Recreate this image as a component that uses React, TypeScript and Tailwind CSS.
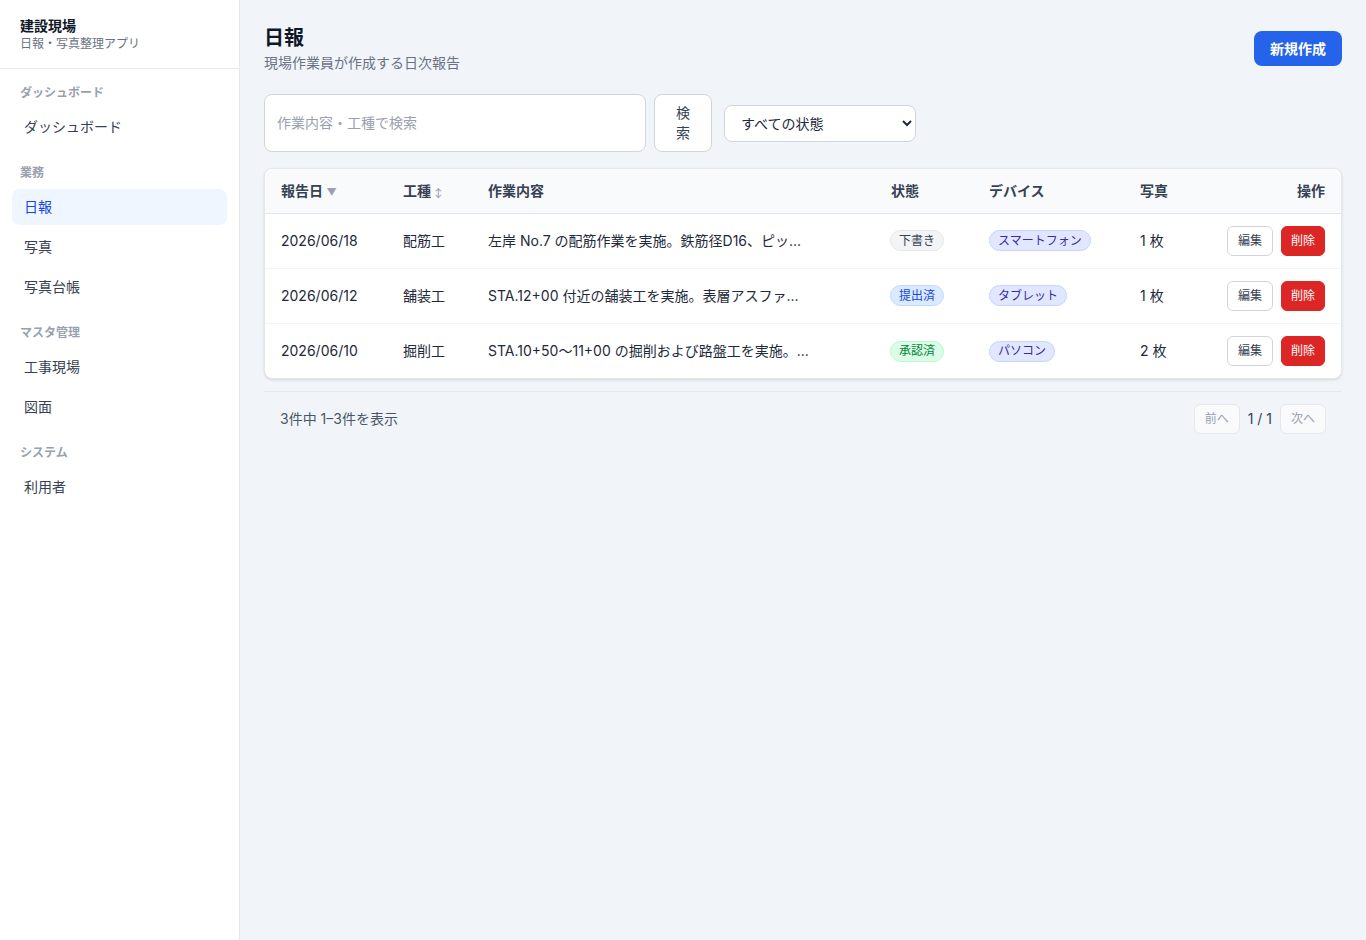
import React from "react";

const navSections = [
  { label: "ダッシュボード", items: ["ダッシュボード"] },
  { label: "業務", items: ["日報", "写真", "写真台帳"] },
  { label: "マスタ管理", items: ["工事現場", "図面"] },
  { label: "システム", items: ["利用者"] },
];

const rows = [
  {
    date: "2026/06/18",
    kind: "配筋工",
    content: "左岸 No.7 の配筋作業を実施。鉄筋径D16、ピッ...",
    status: "下書き",
    statusCls: "bg-gray-100 border-gray-200 text-gray-700",
    device: "スマートフォン",
    photos: "1 枚",
  },
  {
    date: "2026/06/12",
    kind: "舗装工",
    content: "STA.12+00 付近の舗装工を実施。表層アスファ...",
    status: "提出済",
    statusCls: "bg-blue-100 border-blue-200 text-blue-700",
    device: "タブレット",
    photos: "1 枚",
  },
  {
    date: "2026/06/10",
    kind: "掘削工",
    content: "STA.10+50〜11+00 の掘削および路盤工を実施。...",
    status: "承認済",
    statusCls: "bg-green-100 border-green-200 text-green-700",
    device: "パソコン",
    photos: "2 枚",
  },
];

export default function App() {
  return (
    <div
      className="flex min-h-[940px] w-full bg-[#f1f5f9] text-gray-800"
      style={{ fontFamily: '"Inter", "Noto Sans CJK JP", sans-serif' }}
    >
      <aside className="w-[240px] shrink-0 border-r border-gray-200 bg-white">
        <div className="h-[69px] border-b border-gray-200 px-5 pt-4">
          <div className="text-sm font-bold leading-5 text-gray-900">建設現場</div>
          <div className="text-xs leading-4 text-gray-500">日報・写真整理アプリ</div>
        </div>
        <nav className="flex flex-col gap-5 px-3 pt-4">
          {navSections.map((s) => (
            <div key={s.label} className="flex flex-col">
              <div className="mb-2 px-2 text-xs font-bold leading-4 text-gray-400">{s.label}</div>
              <div className="flex flex-col gap-1">
                {s.items.map((it) => {
                  const active = it === "日報";
                  return (
                    <div
                      key={it}
                      className={
                        active
                          ? "flex h-9 items-center rounded-lg bg-blue-50 px-3 text-sm text-blue-700"
                          : "flex h-9 items-center rounded-lg px-3 text-sm text-gray-700"
                      }
                    >
                      {it}
                    </div>
                  );
                })}
              </div>
            </div>
          ))}
        </nav>
      </aside>

      <main className="flex-1 px-6 pt-6">
        <div className="flex items-center justify-between">
          <div>
            <h1 className="text-xl font-bold leading-7 text-gray-900">日報</h1>
            <p className="mt-px text-sm leading-5 text-gray-500">現場作業員が作成する日次報告</p>
          </div>
          <button className="h-[35px] rounded-lg bg-[#2563eb] px-4 text-sm font-semibold text-white">
            新規作成
          </button>
        </div>

        <div className="mt-[21px] flex items-stretch">
          <input
            className="w-[382px] rounded-lg border border-gray-300 bg-white px-3 text-sm text-gray-800 placeholder:text-gray-400"
            placeholder="作業内容・工種で検索"
          />
          <button className="ml-2 w-[58px] rounded-lg border border-gray-300 bg-white px-4 py-2 text-sm leading-5 text-gray-700">
            検索
          </button>
          <select className="ml-3 h-[37px] w-[192px] self-center rounded-lg border border-gray-300 bg-white px-3 text-sm text-gray-800">
            <option>すべての状態</option>
          </select>
        </div>

        <div className="mt-4 overflow-hidden rounded-lg border border-gray-200 bg-white shadow-sm">
          <table className="w-full table-fixed border-collapse text-sm">
            <colgroup>
              <col className="w-[122px]" />
              <col className="w-[85px]" />
              <col className="w-[403px]" />
              <col className="w-[98px]" />
              <col className="w-[151px]" />
              <col className="w-[80px]" />
              <col />
            </colgroup>
            <thead>
              <tr className="h-[44px] border-b border-gray-200 bg-slate-50 text-left text-gray-700">
                <th className="px-4 font-semibold">
                  報告日 <span className="text-[10px] text-gray-400">▼</span>
                </th>
                <th className="px-4 font-semibold">
                  工種 <span className="text-[9px] text-gray-400">↕</span>
                </th>
                <th className="px-4 font-semibold">作業内容</th>
                <th className="px-4 font-semibold">状態</th>
                <th className="px-4 font-semibold">デバイス</th>
                <th className="px-4 font-semibold">写真</th>
                <th className="px-4 text-right font-semibold">操作</th>
              </tr>
            </thead>
            <tbody>
              {rows.map((r, i) => (
                <tr
                  key={r.date}
                  className={i < rows.length - 1 ? "h-[55px] border-b border-gray-100" : "h-[55px]"}
                >
                  <td className="px-4 text-gray-800">{r.date}</td>
                  <td className="px-4 text-gray-800">{r.kind}</td>
                  <td className="whitespace-nowrap px-4 text-gray-800">{r.content}</td>
                  <td className="pl-[15px] pr-4">
                    <span
                      className={`inline-flex h-[21px] items-center rounded-full border px-2 text-xs ${r.statusCls}`}
                    >
                      {r.status}
                    </span>
                  </td>
                  <td className="px-4">
                    <span className="inline-flex h-[21px] items-center rounded-full border border-indigo-200 bg-indigo-100 px-2 text-xs text-indigo-800">
                      {r.device}
                    </span>
                  </td>
                  <td className="px-4 text-gray-800">{r.photos}</td>
                  <td className="px-4">
                    <div className="flex justify-end gap-2">
                      <button className="h-[30px] rounded-md border border-gray-300 bg-white px-[10px] text-xs text-gray-700">
                        編集
                      </button>
                      <button className="h-[30px] rounded-md border border-[#dc2626] bg-[#dc2626] px-[9px] text-xs text-white">
                        削除
                      </button>
                    </div>
                  </td>
                </tr>
              ))}
            </tbody>
          </table>
        </div>

        <div className="mt-3 flex items-center justify-between border-t border-gray-200 px-4 py-3">
          <div className="text-sm text-gray-600">3件中 1–3件を表示</div>
          <div className="flex items-center gap-2">
            <button className="h-[30px] rounded-md border border-gray-200 bg-slate-50 px-[10px] text-xs text-gray-400">
              前へ
            </button>
            <span className="text-sm text-gray-700">1 / 1</span>
            <button className="h-[30px] rounded-md border border-gray-200 bg-slate-50 px-[10px] text-xs text-gray-400">
              次へ
            </button>
          </div>
        </div>
      </main>
    </div>
  );
}
